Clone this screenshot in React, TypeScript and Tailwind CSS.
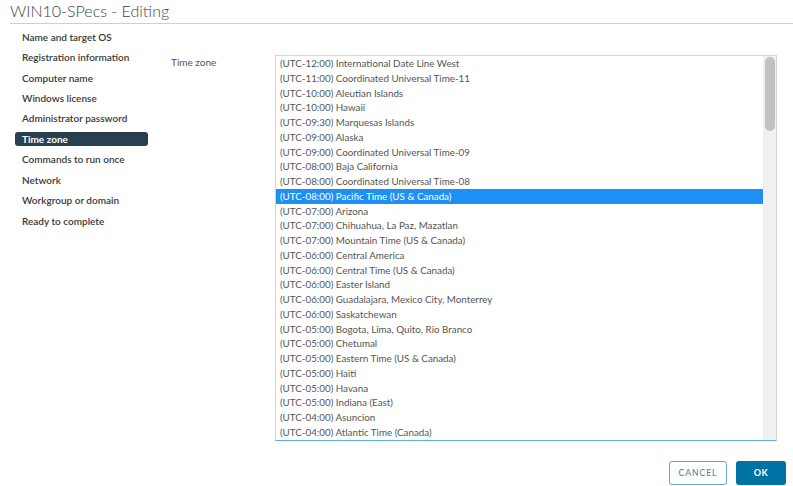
const steps = [
  'Name and target OS',
  'Registration information',
  'Computer name',
  'Windows license',
  'Administrator password',
  'Time zone',
  'Commands to run once',
  'Network',
  'Workgroup or domain',
  'Ready to complete',
];

const zones = [
  '(UTC-12:00) International Date Line West',
  '(UTC-11:00) Coordinated Universal Time-11',
  '(UTC-10:00) Aleutian Islands',
  '(UTC-10:00) Hawaii',
  '(UTC-09:30) Marquesas Islands',
  '(UTC-09:00) Alaska',
  '(UTC-09:00) Coordinated Universal Time-09',
  '(UTC-08:00) Baja California',
  '(UTC-08:00) Coordinated Universal Time-08',
  '(UTC-08:00) Pacific Time (US & Canada)',
  '(UTC-07:00) Arizona',
  '(UTC-07:00) Chihuahua, La Paz, Mazatlan',
  '(UTC-07:00) Mountain Time (US & Canada)',
  '(UTC-06:00) Central America',
  '(UTC-06:00) Central Time (US & Canada)',
  '(UTC-06:00) Easter Island',
  '(UTC-06:00) Guadalajara, Mexico City, Monterrey',
  '(UTC-06:00) Saskatchewan',
  '(UTC-05:00) Bogota, Lima, Quito, Rio Branco',
  '(UTC-05:00) Chetumal',
  '(UTC-05:00) Eastern Time (US & Canada)',
  '(UTC-05:00) Haiti',
  '(UTC-05:00) Havana',
  '(UTC-05:00) Indiana (East)',
  '(UTC-04:00) Asuncion',
  '(UTC-04:00) Atlantic Time (Canada)',
];

export default function App() {
  const active = 'Time zone';
  const selected = '(UTC-08:00) Pacific Time (US & Canada)';

  return (
    <div className="w-[793px] h-[486px] bg-white overflow-hidden flex flex-col font-['Lato','Liberation_Sans',sans-serif] text-[#313131]">
      <div className="ml-[10px] h-[24px] border-b border-[#cfcfcf] flex items-center">
        <h1 className="text-[16px] leading-none font-light text-[#444] -mt-[1px]">WIN10-SPecs - Editing</h1>
      </div>

      <div className="flex flex-1">
        <nav className="w-[156px] pl-[15px] pt-[3px] flex flex-col">
          {steps.map((s) => (
            <div key={s} className="h-[20.45px] flex items-center">
              <div
                className={`w-[133px] h-[14px] flex items-center pl-[7px] rounded-[3px] text-[10px] ${
                  s === active ? 'bg-[#28404f] text-white font-bold' : 'font-semibold text-[#3a3a3a]'
                }`}
              >
                {s}
              </div>
            </div>
          ))}
        </nav>

        <div className="flex-1 flex flex-col">
          <div className="flex mt-[31px]">
            <div className="w-[119px] pl-[15px] h-[15px] flex items-center text-[10px] text-[#555]">Time zone</div>
            <div className="w-[502px] h-[386px] border border-[#d4d4d4] border-b-[#5bb5dc] flex overflow-hidden">
              <ul className="flex-1 flex flex-col overflow-hidden">
                {zones.map((z) => (
                  <li
                    key={z}
                    className={`h-[14.75px] shrink-0 flex items-center pl-[4px] text-[9.8px] whitespace-nowrap ${
                      z === selected ? 'bg-[#1e8ff5] text-white' : 'text-[#555]'
                    }`}
                  >
                    {z}
                  </li>
                ))}
              </ul>
              <div className="w-[13px] bg-[#f0f0f0] flex justify-center pt-[1px]">
                <div className="w-[10px] h-[74px] rounded-full bg-[#c1c1c1]" />
              </div>
            </div>
          </div>

          <div className="flex justify-end gap-[9px] mt-[20px] pr-[7px]">
            <button className="w-[58px] h-[24px] rounded-[3px] border border-[#6aa7c6] text-[#4f86a3] text-[8.5px] tracking-[1px] font-medium">
              CANCEL
            </button>
            <button className="w-[50px] h-[24px] rounded-[3px] bg-[#0072a3] text-white text-[9px] tracking-[0.5px] font-bold">
              OK
            </button>
          </div>
        </div>
      </div>
    </div>
  );
}
